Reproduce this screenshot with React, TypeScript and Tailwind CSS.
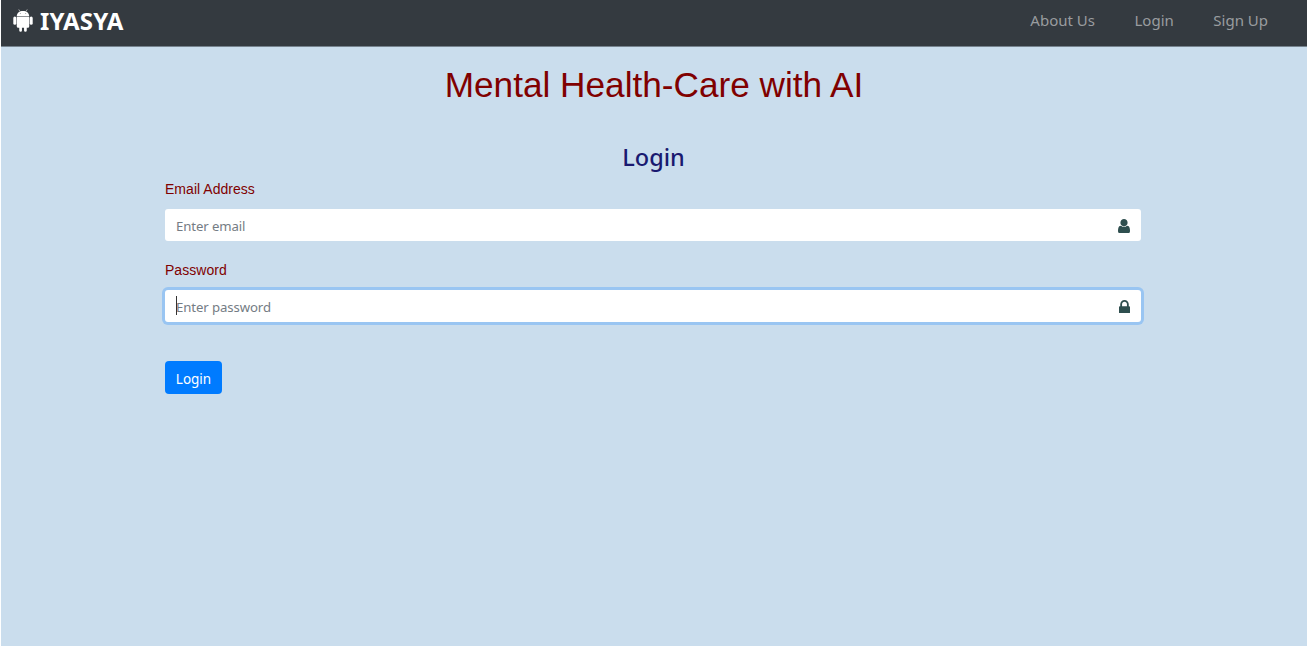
import type { ReactNode } from "react";

function AndroidIcon() {
  return (
    <svg viewBox="0 0 40 46" className="h-[23px] w-[20px] shrink-0" fill="white">
      <path d="M14 5 L11.5 0.8 M26 5 L28.5 0.8" stroke="white" strokeWidth="1.1" />
      <path fillRule="evenodd" d="M7.500 14.300C8 7.500 13 3.800 20 3.800S32 7.500 32.500 14.300ZM14.500 8.400a0.900 0.900 0 1 0 0 1.800a0.900 0.900 0 0 0 0-1.800ZM25.500 8.400a0.900 0.900 0 1 0 0 1.800a0.900 0.900 0 0 0 0-1.800Z" />
      <path d="M7.500 15.300H32.500V34.500a3 3 0 0 1-3 3H27.500V43a2.700 2.700 0 0 1-5.400 0V37.500H17.900V43a2.700 2.700 0 0 1-5.400 0V37.500H10.500a3 3 0 0 1-3-3Z" />
      <rect x="0.600" y="15" width="6" height="16.500" rx="3" />
      <rect x="33.400" y="15" width="6" height="16.500" rx="3" />
    </svg>
  );
}

function UserIcon() {
  return (
    <svg viewBox="0 128 1280 1536" className="mt-[2px] h-[14.5px] w-[12px]" fill="#2f4f4f">
      <path d="M1280 1399q0 109-62.500 187t-150.500 78h-854q-88 0-150.500-78t-62.500-187q0-85 8.500-160.500t31.500-152 58.500-131 94-89 134.500-34.500q131 128 313 128t313-128q76 0 134.500 34.500t94 89 58.500 131 31.500 152 8.500 160.500zm-256-887q0 159-112.500 271.500t-271.500 112.500-271.500-112.500-112.500-271.500 112.500-271.500 271.500-112.500 271.500 112.500 112.500 271.500z" />
    </svg>
  );
}

function LockIcon() {
  return (
    <svg viewBox="0 128 1152 1408" className="mt-px h-[13.5px] w-[11px]" fill="#2f4f4f">
      <path d="M320 768h512v-192q0-106-75-181t-181-75-181 75-75 181v192zm832 96v576q0 40-28 68t-68 28h-960q-40 0-68-28t-28-68v-576q0-40 28-68t68-28h32v-192q0-184 132-316t316-132 316 132 132 316v192h32q40 0 68 28t28 68z" />
    </svg>
  );
}

function Field({ label, placeholder, icon, focused = false }: { label: string; placeholder: string; icon: ReactNode; focused?: boolean }) {
  return (
    <div className="h-[81px]">
      <div className="h-[29px] font-['Liberation_Sans',sans-serif] text-[14px] leading-[18px] tracking-[0.03px] text-[#800000]">{label}</div>
      <div
        className={
          focused
            ? "flex h-[32px] w-[976px] items-center justify-between rounded-[3px] bg-white pr-[11.5px] pl-[11px] shadow-[0_0_0_3px_#99c5f2]"
            : "flex h-[32px] w-[976px] items-center justify-between rounded-[3px] bg-white pr-[11.5px] pl-[11px]"
        }
      >
        <div className="relative pt-[2px] text-[13.2px] leading-[20px] tracking-[-0.1px] text-[#747c84]">
          {placeholder}
          {focused && <span className="absolute top-px left-0 h-[19px] w-px bg-[#333]" />}
        </div>
        {icon}
      </div>
    </div>
  );
}

export default function App() {
  return (
    <div className="h-[647px] w-[1311px] overflow-hidden bg-white pl-px font-['Noto_Sans',sans-serif]">
      <div className="h-[646px] w-[1306px] bg-[#cadded]">
        <nav className="flex h-[47px] items-center justify-between border-b border-[#76838e] bg-[#343a40] pr-[39px] pb-[5px] pl-[12px]">
          <div className="flex items-center gap-[7px]">
            <AndroidIcon />
            <span className="text-[24px] leading-[28px] font-bold tracking-[0.1px] text-white">IYASYA</span>
          </div>
          <div className="flex gap-[39.5px] pb-[2px] text-[15px] leading-[22px] text-[#999c9f]">
            <span>About Us</span>
            <span>Login</span>
            <span>Sign Up</span>
          </div>
        </nav>
        <h1 className="mt-[16px] text-center font-['Liberation_Sans',sans-serif] text-[35.2px] leading-[44px] text-[#800000]">Mental Health-Care with AI</h1>
        <main className="ml-[164px] w-[976px] pt-[34px]">
          <h2 className="h-[39px] pl-px text-center text-[23.5px] leading-[32px] font-medium text-[#191970]">Login</h2>
          <Field label="Email Address" placeholder="Enter email" icon={<UserIcon />} />
          <Field label="Password" placeholder="Enter password" icon={<LockIcon />} focused />
          <button className="mt-[19px] h-[33px] w-[57px] rounded-[4px] bg-[#007bff] pt-[2px] text-[13.5px] leading-[20px] text-white">Login</button>
        </main>
      </div>
    </div>
  );
}
